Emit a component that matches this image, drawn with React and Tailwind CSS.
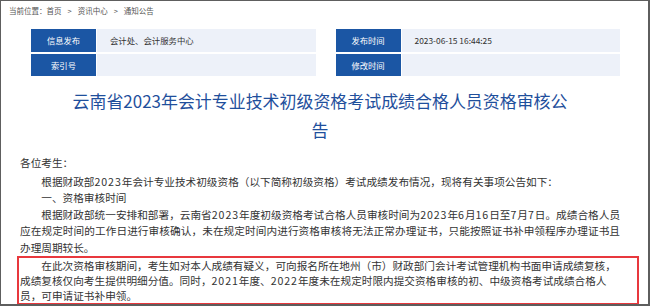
const meta = [
  [
    { label: "信息发布", value: "会计处、会计服务中心" },
    { label: "发布时间", value: "2023-06-15 16:44:25" },
  ],
  [
    { label: "索引号", value: "" },
    { label: "修改时间", value: "" },
  ],
];

const crumbs = ["首页", "资讯中心", "通知公告"];

const MetaCell = ({ label, value }) => (
  <div className="flex gap-[1px] w-[288px]">
    <div className="w-[65px] shrink-0 flex items-center justify-center bg-[#1b56a4] text-white text-[8.3px]">
      {label}
    </div>
    <div className="flex-1 flex items-center pl-[13px] bg-[#edf1f9] text-[#333] text-[8.4px]">
      {value}
    </div>
  </div>
);

// digits in the original font run a little wider than Noto's
const N = ({ children }) => <span className="tracking-[0.9px]">{children}</span>;

const App = () => {
  return (
    <div className="w-[650px] h-[306px] overflow-hidden bg-white border-l border-t border-r-2 border-b-2 border-[#5e5e5e] font-['Noto_Sans_CJK_SC',sans-serif] [text-spacing-trim:space-all]">
      <div className="flex items-center pl-[8px] h-[28px] pb-[8px] text-[7.5px] text-[#555]">
        <span>当前位置：</span>
        {crumbs.map((c, i) => (
          <span key={c} className="flex items-center">
            {i > 0 && <span className="mx-[6px]">&gt;</span>}
            {c}
          </span>
        ))}
      </div>

      <div className="px-[19px] w-[638px]">
        <div className="flex flex-col gap-[2px] ml-[11px]">
          {meta.map((row, i) => (
            <div key={i} className="flex gap-[20px] h-[22.5px]">
              {row.map((cell) => (
                <MetaCell key={cell.label} {...cell} />
              ))}
            </div>
          ))}
        </div>

        <h1 className="mt-[10px] mx-auto w-[495px] text-center text-[16.95px] leading-[29px] text-[#1f4f9c]">
          云南省2023年会计专业技术初级资格考试成绩合格人员资格审核公告
        </h1>

        <div className="mt-[11px] text-[10.65px] text-[#333] leading-[16.5px] text-justify">
          <p className="mb-[2px]">各位考生：</p>
          <p className="indent-[2em]">
            根据财政部<N>2023</N>年会计专业技术初级资格（以下简称初级资格）考试成绩发布情况，现将有关事项公告如下：
          </p>
          <p className="indent-[2em]">一、资格审核时间</p>
          <p className="indent-[2em]">
            根据财政部统一安排和部署，云南省<N>2023</N>年度初级资格考试合格人员审核时间为<N>2023</N>年<N>6</N>月<N>16</N>日至<N>7</N>月<N>7</N>日。成绩合格人员应在规定时间的工作日进行审核确认，未在规定时间内进行资格审核将无法正常办理证书，只能按照证书补申领程序办理证书且办理周期较长。
          </p>
          <p className="indent-[2em] -ml-[3px] pl-[1px] border-2 border-[#e8383d] leading-[15px] w-[622px]">
            在此次资格审核期间，考生如对本人成绩有疑义，可向报名所在地州（市）财政部门会计考试管理机构书面申请成绩复核，
            <br />
            成绩复核仅向考生提供明细分值。同时，<N>2021</N>年度、<N>2022</N>年度未在规定时限内提交资格审核的初、中级资格考试成绩合格人
            <br />
            员，可申请证书补申领。
          </p>
        </div>
      </div>
    </div>
  );
};

export default App;
